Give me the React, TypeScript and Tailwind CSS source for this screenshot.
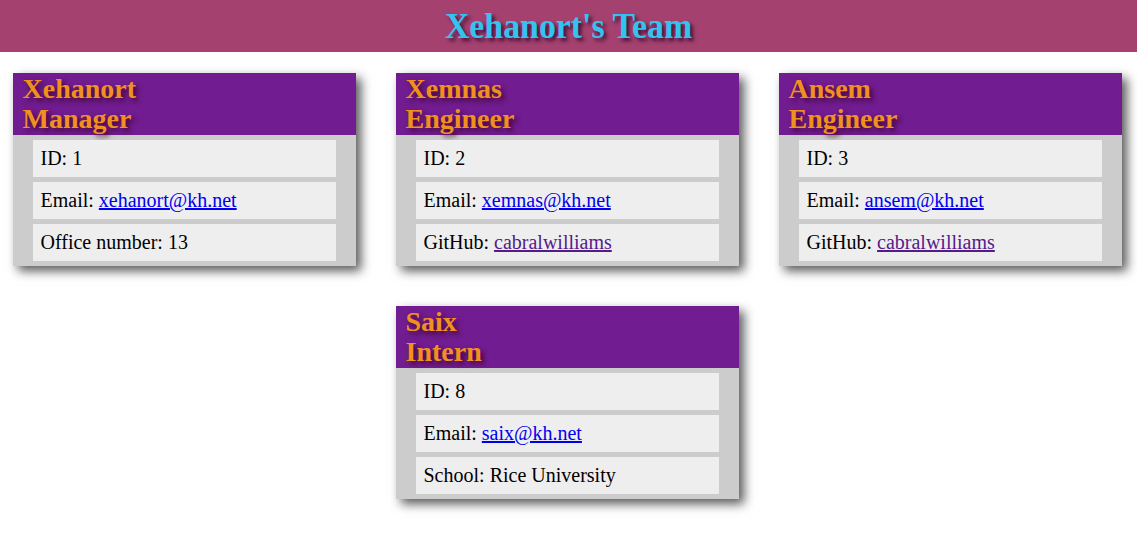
type Member = {
  name: string;
  role: string;
  id: number;
  email: string;
  extraLabel: string;
  extra: string;
  github?: boolean;
};

const team: Member[] = [
  { name: "Xehanort", role: "Manager", id: 1, email: "xehanort@kh.net", extraLabel: "Office number", extra: "13" },
  { name: "Xemnas", role: "Engineer", id: 2, email: "xemnas@kh.net", extraLabel: "GitHub", extra: "cabralwilliams", github: true },
  { name: "Ansem", role: "Engineer", id: 3, email: "ansem@kh.net", extraLabel: "GitHub", extra: "cabralwilliams", github: true },
  { name: "Saix", role: "Intern", id: 8, email: "saix@kh.net", extraLabel: "School", extra: "Rice University" },
];

function Card({ member }: { member: Member }) {
  return (
    <div className="w-[343px] bg-[#cccccc] shadow-[5px_5px_10px_rgba(0,0,0,0.65)]">
      <div className="bg-[#711c91] px-[10px] pt-[1px] pb-[1px] text-[28px] font-bold leading-[30px] text-[#f0911f] [text-shadow:3px_3px_5px_rgba(60,0,30,0.85)]">
        <div>{member.name}</div>
        <div>{member.role}</div>
      </div>
      <ul className="flex flex-col gap-[5px] px-5 py-[5px] text-[20px] text-black">
        <li className="bg-[#eeeeee] px-2 leading-[37px]">ID: {member.id}</li>
        <li className="bg-[#eeeeee] px-2 leading-[37px]">
          Email:{" "}
          <a href={`mailto:${member.email}`} className="text-[#0000ee] underline">
            {member.email}
          </a>
        </li>
        <li className="bg-[#eeeeee] px-2 leading-[37px]">
          {member.extraLabel}:{" "}
          {member.github ? (
            <a href="#" className="text-[#551a8b] underline">
              {member.extra}
            </a>
          ) : (
            member.extra
          )}
        </li>
      </ul>
    </div>
  );
}

export default function App() {
  return (
    <div className="min-h-[537px] bg-white font-['Liberation_Serif','Times_New_Roman',serif]">
      <header className="flex h-[52px] items-center justify-center bg-[#a4416f]">
        <h1 className="inline-block scale-x-[0.94] text-[36px] font-bold leading-none text-[#33c3ef] [text-shadow:3px_3px_4px_rgba(40,0,40,0.75)]">
          Xehanort's Team
        </h1>
      </header>
      <main className="mt-[21px] flex flex-wrap justify-center gap-x-[40px] gap-y-10 pr-[3px]">
        {team.map((m) => (
          <Card key={m.name + m.id} member={m} />
        ))}
      </main>
    </div>
  );
}
